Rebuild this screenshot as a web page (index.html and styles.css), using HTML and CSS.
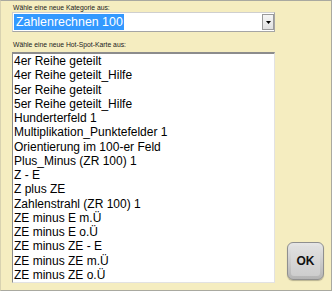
FILE: index.html
```
<!DOCTYPE html>
<html>
<head>
<meta charset="utf-8">
<link rel="stylesheet" href="styles.css">
</head>
<body>
<div class="window">
  <div class="main">
    <div class="label">Wähle eine neue Kategorie aus:</div>
    <div class="select">
      <span class="selected">Zahlenrechnen 100</span>
      <span class="drop"><svg width="5" height="3" viewBox="0 0 5 3"><path d="M0 0H5L2.5 3Z" fill="#000"/></svg></span>
    </div>
    <div class="label label2">Wähle eine neue Hot-Spot-Karte aus:</div>
    <div class="list">
      <div class="item">4er Reihe geteilt</div>
      <div class="item">4er Reihe geteilt_Hilfe</div>
      <div class="item">5er Reihe geteilt</div>
      <div class="item">5er Reihe geteilt_Hilfe</div>
      <div class="item">Hunderterfeld 1</div>
      <div class="item">Multiplikation_Punktefelder 1</div>
      <div class="item">Orientierung im 100-er Feld</div>
      <div class="item">Plus_Minus (ZR 100) 1</div>
      <div class="item">Z - E</div>
      <div class="item">Z plus ZE</div>
      <div class="item">Zahlenstrahl (ZR 100) 1</div>
      <div class="item">ZE minus E m.Ü</div>
      <div class="item">ZE minus E o.Ü</div>
      <div class="item">ZE minus ZE - E</div>
      <div class="item">ZE minus ZE m.Ü</div>
      <div class="item">ZE minus ZE o.Ü</div>
    </div>
  </div>
  <div class="side">
    <button class="ok"><span class="ok-inner">OK</span></button>
  </div>
</div>
</body>
</html>
```
FILE: styles.css
```
html, body {
  margin: 0;
  padding: 0;
  background: #ffffff;
}
.window {
  width: 332px;
  height: 291px;
  box-sizing: border-box;
  border: 1px solid #a9a9a0;
  border-left-color: #d8d2b0;
  background: #f5edc0;
  display: flex;
  font-family: "Liberation Sans", Arial, sans-serif;
}
.main {
  margin-left: 11px;
  width: 263px;
  display: flex;
  flex-direction: column;
  padding-top: 2px;
}
.label {
  font-size: 6.8px;
  line-height: 9px;
  height: 9px;
  color: #222;
  padding-left: 1px;
  white-space: nowrap;
}
.label2 {
  margin-top: 8px;
  margin-bottom: 3px;
}
.select {
  height: 20px;
  box-sizing: border-box;
  background: #fff;
  border: 1px solid #a5a5a5;
  border-top-color: #cfcfcf;
  border-left-color: #cfcfcf;
  display: flex;
  align-items: stretch;
  padding: 1px 0 1px 1px;
}
.selected {
  background: #3399ff;
  color: #fff;
  font-size: 12.4px;
  line-height: 16px;
  padding: 0 1px 0 2px;
  white-space: nowrap;
}
.drop {
  margin-left: auto;
  width: 12px;
  box-sizing: border-box;
  border: 1px solid #9a9a9a;
  background: linear-gradient(#f6f6f6, #e0e0e0);
  display: flex;
  align-items: center;
  justify-content: center;
}
.list {
  height: 231px;
  box-sizing: border-box;
  background: #fff;
  border: 1px solid #e2e2e2;
  border-top: 2px solid #8c8c8c;
  border-left: 1px solid #8c8c8c;
  padding: 0 0 0 1px;
  overflow: hidden;
  font-size: 12px;
  line-height: 14.27px;
  color: #000;
}
.item {
  white-space: nowrap;
}
.side {
  flex: 1;
  display: flex;
  align-items: flex-end;
  padding-left: 12px;
  padding-bottom: 10px;
}
.ok {
  width: 37px;
  height: 38px;
  box-sizing: border-box;
  padding: 3px;
  border: 1px solid #8f8f8f;
  border-radius: 6px;
  background: linear-gradient(#e6e6e6, #b4b4b4);
  box-shadow: 0 1px 1px rgba(0,0,0,0.25);
  display: flex;
}
.ok-inner {
  flex: 1;
  border-radius: 3px;
  background: linear-gradient(#e0e0e0, #cdcdcd);
  font-family: "Liberation Sans", Arial, sans-serif;
  font-weight: bold;
  font-size: 12px;
  color: #111;
  display: flex;
  align-items: center;
  justify-content: center;
}
```
